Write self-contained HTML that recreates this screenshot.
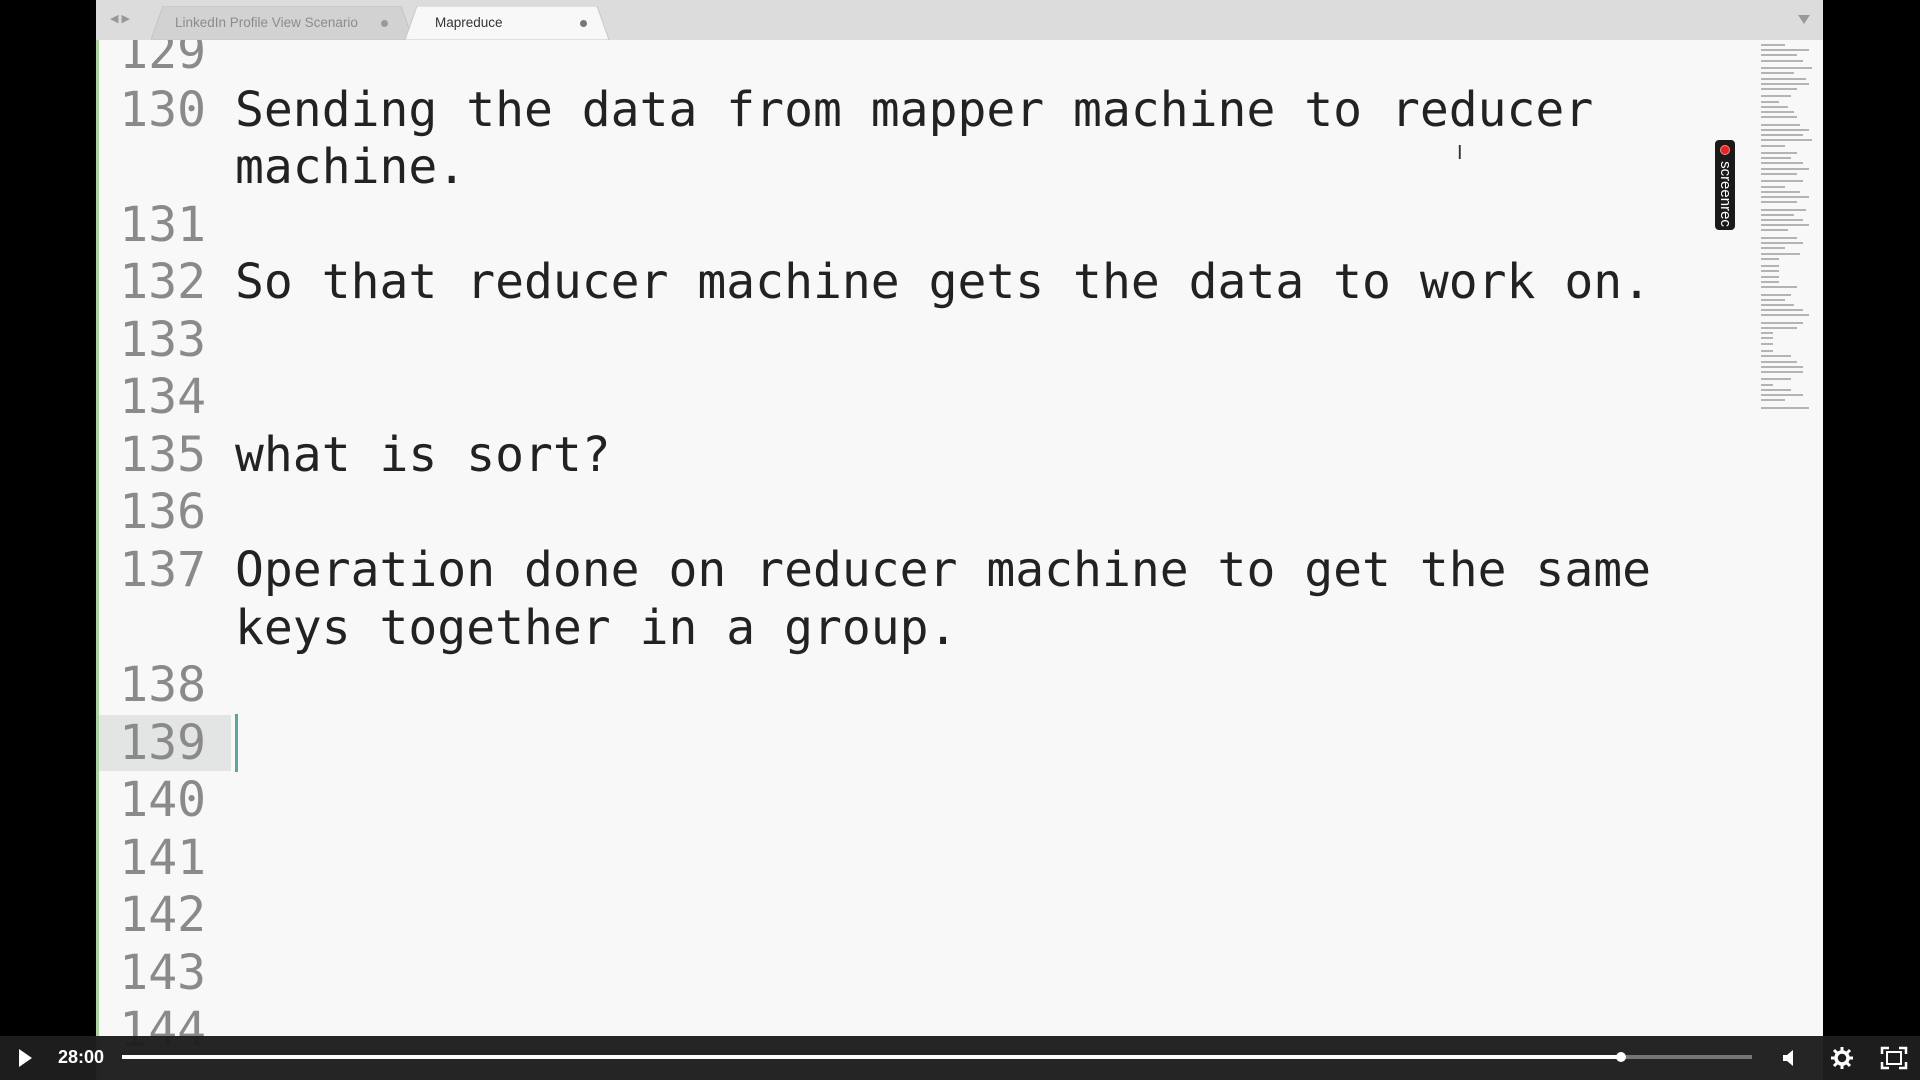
<!DOCTYPE html>
<html><head><meta charset="utf-8"><style>
*{margin:0;padding:0;box-sizing:border-box}
body{width:1920px;height:1080px;background:#000;position:relative;overflow:hidden;font-family:"Liberation Sans",sans-serif}
#tabbar{position:absolute;left:96px;top:0;width:1727px;height:40px;background:#dcdcdc}
#editor{position:absolute;left:96px;top:40px;width:1727px;height:1040px;background:#f7f8f7;border-left:3px solid #a9d39e;overflow:hidden}
.row{position:absolute;left:0;height:57.55px;line-height:57.55px;font-family:"DejaVu Sans Mono","Liberation Mono",monospace;font-size:48px;white-space:pre}
.num{position:absolute;left:0;width:107px;text-align:right;color:#8a8a8a}
.txt{position:absolute;left:136px;color:#222}
.tab{position:absolute;top:6px;height:34px;font-size:13.5px;color:#8c8c8c;line-height:34px}
.mm{position:absolute;height:2px;background:#b4b4b4;left:1761px}
</style></head><body>
<div id="tabbar">
 <div style="position:absolute;left:14px;top:12px;font-size:11px;color:#999">◀ ▶</div>
 <svg style="position:absolute;left:55px;top:6px" width="270" height="34"><path d="M0 34 L12 0 L250 0 L262 34 Z" fill="#d2d2d2" stroke="#c4c4c4"/></svg>
 <svg style="position:absolute;left:309px;top:6px" width="220" height="34"><path d="M0 34 L12 0 L192 0 L204 34 Z" fill="#f7f8f7" stroke="#c8c8c8"/></svg>
 <div class="tab" style="left:79px">LinkedIn Profile View Scenario</div>
 <div style="position:absolute;left:285px;top:20px;width:7px;height:7px;border-radius:50%;background:#999"></div>
 <div class="tab" style="left:339px;color:#333">Mapreduce</div>
 <div style="position:absolute;left:484px;top:20px;width:7px;height:7px;border-radius:50%;background:#777"></div>
 <div style="position:absolute;left:1702px;top:15px;width:0;height:0;border-left:6px solid transparent;border-right:6px solid transparent;border-top:9px solid #999"></div>
</div>
<div id="editor">
 <div style="position:absolute;left:0;top:675px;width:132px;height:56px;background:#e3e4e4"></div>
 <div style="position:absolute;left:136px;top:674px;width:3px;height:58px;background:#5aa6a0"></div>
 <div class="row" style="top:-16px"><span class="num">129</span></div>
 <div class="row" style="top:41.5px"><span class="num">130</span><span class="txt">Sending the data from mapper machine to reducer</span></div>
 <div class="row" style="top:99px"><span class="txt">machine.</span></div>
 <div class="row" style="top:156.6px"><span class="num">131</span></div>
 <div class="row" style="top:214.2px"><span class="num">132</span><span class="txt">So that reducer machine gets the data to work on.</span></div>
 <div class="row" style="top:271.7px"><span class="num">133</span></div>
 <div class="row" style="top:329.3px"><span class="num">134</span></div>
 <div class="row" style="top:386.8px"><span class="num">135</span><span class="txt">what is sort?</span></div>
 <div class="row" style="top:444.4px"><span class="num">136</span></div>
 <div class="row" style="top:501.9px"><span class="num">137</span><span class="txt">Operation done on reducer machine to get the same</span></div>
 <div class="row" style="top:559.5px"><span class="txt">keys together in a group.</span></div>
 <div class="row" style="top:617px"><span class="num">138</span></div>
 <div class="row" style="top:674.6px"><span class="num">139</span></div>
 <div class="row" style="top:732.1px"><span class="num">140</span></div>
 <div class="row" style="top:789.7px"><span class="num">141</span></div>
 <div class="row" style="top:847.2px"><span class="num">142</span></div>
 <div class="row" style="top:904.8px"><span class="num">143</span></div>
 <div class="row" style="top:962.3px"><span class="num">144</span></div>
 <div style="position:absolute;left:1358px;top:102px;font-size:20px;color:#333">I</div>
 <div style="position:absolute;left:1616px;top:100px;width:20px;height:90px;background:#1a1a1a;border-radius:4px">
  <div style="position:absolute;left:5px;top:5px;width:10px;height:10px;border-radius:50%;background:#e22;border:1px solid #f88"></div>
  <div style="position:absolute;left:-26px;top:44px;width:72px;transform:rotate(90deg);color:#fff;font-size:15px;text-align:center;line-height:20px">screenrec</div>
 </div>
</div>
<div id="mm"></div>
<script>
var h='',y=44,w=[40,80,60,70,85,55,75,80,60,50,30,45,55,60,65,80,70,85,40,60,50,70,80,60,70,40,65,80,60,75,55,70,80,45,60,70,40,65,30,30,30,30,30,60,50,40,55,70,80,70,60,20,20,20,20,50,60,70,70,50,20,50,70,40,80];
for(var i=0;i<w.length;i++){h+='<div class="mm" style="top:'+y+'px;width:'+(w[i]*0.6)+'px"></div>';y+=(i%5==3?7.5:5.2);}
document.getElementById('mm').innerHTML=h;
</script>
<div style="position:absolute;left:0;top:1036px;width:1920px;height:44px;background:rgba(30,30,30,0.97)"></div>
<svg style="position:absolute;left:17px;top:1048px" width="16" height="20"><path d="M2 1 L15 10 L2 19 Z" fill="#fff"/></svg>
<div style="position:absolute;left:58px;top:1047px;color:#fff;font-size:18px;font-weight:bold">28:00</div>
<div style="position:absolute;left:122px;top:1055px;width:1630px;height:4px;background:#777"></div>
<div style="position:absolute;left:122px;top:1055px;width:1500px;height:4px;background:#fff"></div>
<div style="position:absolute;left:1616px;top:1052px;width:10px;height:10px;border-radius:50%;background:#fff"></div>
<svg style="position:absolute;left:1781px;top:1048px" width="16" height="20"><path d="M2 7 L6 7 L12 2 L12 18 L6 13 L2 13 Z" fill="#fff"/></svg>
<svg style="position:absolute;left:1830px;top:1046px" width="24" height="24" viewBox="0 0 24 24"><circle cx="12" cy="12" r="6" fill="none" stroke="#fff" stroke-width="3.5"/><path d="M12 1v5M12 18v5M1 12h5M18 12h5M4 4l3.5 3.5M16.5 16.5L20 20M4 20l3.5-3.5M16.5 7.5L20 4" stroke="#fff" stroke-width="3"/></svg>
<svg style="position:absolute;left:1880px;top:1046px" width="28" height="24"><path d="M2 8V2h7M19 2h7v6M26 16v6h-7M9 22H2v-6" fill="none" stroke="#fff" stroke-width="2.5"/><rect x="7" y="6" width="14" height="12" fill="none" stroke="#fff" stroke-width="2"/></svg>
</body></html>
